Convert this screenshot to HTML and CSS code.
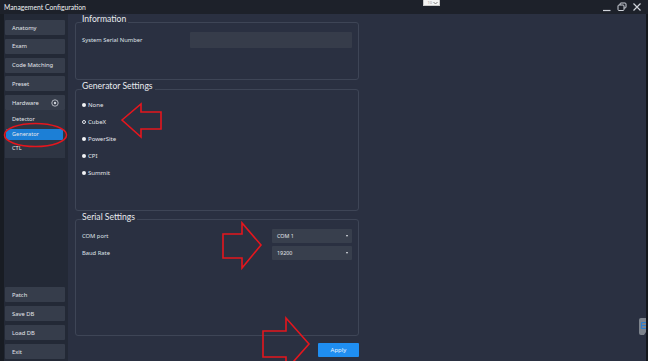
FILE: index.html
```html
<!DOCTYPE html>
<html lang="en">
<head>
<meta charset="utf-8">
<title>Management Configuration</title>
<link rel="stylesheet" href="styles.css">
</head>
<body>
<div class="window">
  <header class="titlebar">
    <span class="title">Management Configuration</span>
    <div class="mini-select"><span>10</span><svg width="5" height="4" viewBox="0 0 5 4"><path d="M0.5 1 L2.5 3 L4.5 1" fill="none" stroke="#777" stroke-width="0.9"/></svg></div>
    <div class="win-controls">
      <svg class="wc" width="10" height="10" viewBox="0 0 10 10"><path d="M1 8.5 H8.5" stroke="#cfd3da" stroke-width="1.2"/></svg>
      <svg class="wc" width="10" height="10" viewBox="0 0 10 10"><rect x="3" y="1" width="6" height="5" rx="1" fill="none" stroke="#cfd3da" stroke-width="1"/><rect x="1" y="3" width="6" height="5.5" rx="1" fill="#1d212a" stroke="#cfd3da" stroke-width="1"/></svg>
      <svg class="wc" width="10" height="10" viewBox="0 0 10 10"><path d="M1.5 1.5 L8.5 8.5 M8.5 1.5 L1.5 8.5" stroke="#cfd3da" stroke-width="1.2"/></svg>
    </div>
  </header>
  <div class="body">
    <aside class="sidebar">
      <nav class="nav-top">
        <button class="nav-btn">Anatomy</button>
        <button class="nav-btn">Exam</button>
        <button class="nav-btn">Code Matching</button>
        <button class="nav-btn">Preset</button>
        <div class="nav-group">
          <button class="nav-btn nav-expander">Hardware
            <svg width="8" height="8" viewBox="0 0 8 8"><circle cx="4" cy="4" r="3.2" fill="none" stroke="#cfd3da" stroke-width="0.8"/><circle cx="4" cy="4" r="1.2" fill="#cfd3da"/></svg>
          </button>
          <div class="submenu">
            <div class="sub-item">Detector</div>
            <div class="sub-item active">Generator</div>
            <div class="sub-item">CTL</div>
          </div>
        </div>
      </nav>
      <nav class="nav-bottom">
        <button class="nav-btn">Patch</button>
        <button class="nav-btn">Save DB</button>
        <button class="nav-btn">Load DB</button>
        <button class="nav-btn">Exit</button>
      </nav>
    </aside>
    <main class="content">
      <div class="column">
        <fieldset class="group group-info">
          <legend>Information</legend>
          <div class="form-row">
            <label class="field-label">System Serial Number</label>
            <div class="text-input"></div>
          </div>
        </fieldset>
        <fieldset class="group group-gen">
          <legend>Generator Settings</legend>
          <div class="radio-list">
            <div class="radio"><span class="dot"></span>None</div>
            <div class="radio"><span class="dot ring"></span>CubeX</div>
            <div class="radio"><span class="dot"></span>PowerSite</div>
            <div class="radio"><span class="dot"></span>CPI</div>
            <div class="radio"><span class="dot"></span>Summit</div>
          </div>
        </fieldset>
        <fieldset class="group group-serial">
          <legend>Serial Settings</legend>
          <div class="form-row compact">
            <label class="field-label">COM port</label>
            <div class="select"><span>COM 1</span><span class="caret"></span></div>
          </div>
          <div class="form-row compact">
            <label class="field-label">Baud Rate</label>
            <div class="select"><span>19200</span><span class="caret"></span></div>
          </div>
        </fieldset>
        <div class="actions"><button class="apply">Apply</button></div>
      </div>
    </main>
    <div class="edge"></div>
  </div>
  <div class="side-tab">
    <svg width="8" height="17" viewBox="0 0 8 17"><path d="M3 0 H8 V14 L6 17 H3 Q1 17 1 15 V2 Q1 0 3 0 Z" fill="#7d838c"/><path d="M3.5 4.5 H8 M3.5 7.5 H8 M3.5 10.5 H8 M3.5 4.5 V10.5" stroke="#2b7fd0" stroke-width="1.2" fill="none"/></svg>
  </div>
  <svg class="annotations" width="648" height="361" viewBox="0 0 648 361">
    <g fill="none" stroke="#e5161d" stroke-width="1.6" stroke-linejoin="miter">
      <polygon points="122,120 141,104 141,112 161,112 161,129 141,129 141,137"/>
      <polygon points="223,234 242,234 242,223 261,245 242,268 242,258 223,258"/>
      <polygon points="263,331 286,331 286,318 309,344 286,370 286,357 263,357"/>
      <ellipse cx="35.5" cy="135" rx="31" ry="11.5"/>
    </g>
  </svg>
</div>
</body>
</html>
```

FILE: styles.css
```css
* { box-sizing: border-box; }
html, body {
  margin: 0;
  padding: 0;
  background: #2a3041;
}
body {
  font-family: "Noto Sans", "Open Sans", sans-serif;
  color: #e4e7ec;
}
.window {
  position: relative;
  width: 648px;
  height: 361px;
  overflow: hidden;
  background: #2a3041;
  display: flex;
  flex-direction: column;
}
.titlebar {
  position: relative;
  height: 14px;
  flex: none;
  background: #1d212a;
  display: flex;
  align-items: center;
  padding: 0 6px 0 4px;
}
.title {
  font-family: Lato, "Noto Sans", sans-serif;
  font-size: 6.8px;
  color: #eef0f3;
  line-height: 10px;
}
.mini-select {
  position: absolute;
  left: 423px;
  top: 0;
  width: 17px;
  height: 6px;
  background: #f4f4f4;
  border: 1px solid #c9c9c9;
  border-top: none;
  display: flex;
  align-items: center;
  justify-content: flex-end;
  gap: 1px;
  padding-right: 1px;
  font-size: 4px;
  line-height: 5px;
  color: #999;
}
.win-controls {
  margin-left: auto;
  display: flex;
  gap: 5px;
  align-items: center;
}
.wc { display: block; }
.body {
  flex: 1;
  display: flex;
  min-height: 0;
}
.sidebar {
  width: 68px;
  flex: none;
  background: #232936;
  border-left: 4px solid #181c23;
  padding: 6px 3px 2px 1px;
  display: flex;
  flex-direction: column;
  justify-content: space-between;
}
.nav-top, .nav-bottom {
  display: flex;
  flex-direction: column;
  gap: 3.75px;
}
.nav-bottom { gap: 4px; }
.nav-btn {
  display: flex;
  align-items: center;
  justify-content: space-between;
  width: 60px;
  height: 15px;
  margin: 0;
  padding: 0 0 0 7px;
  border: none;
  border-radius: 1px;
  background: #363d4b;
  color: #e4e7ec;
  font-family: "Noto Sans", "Open Sans", sans-serif;
  font-size: 5.8px;
  text-align: left;
}
.nav-expander { padding-right: 6px; }
.nav-expander svg { display: block; }
.nav-group { display: flex; flex-direction: column; }
.submenu {
  width: 60px;
  background: #2e3543;
  padding: 4px 2px 3px 1px;
  display: flex;
  flex-direction: column;
  gap: 3px;
}
.sub-item {
  height: 11.5px;
  line-height: 11.5px;
  font-size: 5.6px;
  padding-left: 6px;
  color: #e4e7ec;
}
.sub-item.active {
  background: #1c7fd6;
  border-radius: 1px;
}
.content {
  flex: 1;
  padding-left: 7px;
  display: flex;
}
.column {
  width: 284px;
  display: flex;
  flex-direction: column;
}
.group {
  margin: 0;
  min-inline-size: 0;
  border: 1px solid #3e4556;
  border-radius: 3px;
  padding: 0 6px;
}
.group legend {
  font-family: Lato, "Noto Sans", sans-serif;
  font-size: 8.6px;
  line-height: 10px;
  padding: 0 2px 6px 0;
  margin-left: 0;
  color: #e8eaee;
}
.group-info { padding-top: 2px; padding-bottom: 31px; }
.group-gen { padding-top: 0; padding-bottom: 29px; margin-top: 1px; }
.group-serial { padding-top: 1px; padding-bottom: 75px; margin-top: 1px; }
.form-row {
  display: flex;
  align-items: center;
  justify-content: space-between;
  height: 16px;
}
.form-row.compact { height: 14px; }
.form-row.compact + .form-row.compact { margin-top: 3px; }
.field-label {
  font-size: 5.8px;
  color: #dfe2e8;
}
.text-input {
  width: 162px;
  height: 16px;
  background: #363c4a;
  border-radius: 1px;
}
.select {
  width: 80px;
  height: 14px;
  background: #383f4d;
  border-radius: 1px;
  display: flex;
  align-items: center;
  justify-content: space-between;
  padding: 0 4px 0 5px;
  font-size: 5.4px;
  color: #e4e7ec;
}
.caret {
  width: 0;
  height: 0;
  border-left: 1.5px solid transparent;
  border-right: 1.5px solid transparent;
  border-top: 2px solid #e4e7ec;
}
.radio-list {
  display: flex;
  flex-direction: column;
}
.radio {
  height: 16.8px;
  display: flex;
  align-items: center;
  gap: 2px;
  font-size: 6px;
  color: #e4e7ec;
}
.dot {
  width: 4px;
  height: 4px;
  border-radius: 50%;
  background: #f1f2f4;
}
.dot.ring {
  background: transparent;
  border: 1px solid #e4e7ec;
}
.actions {
  display: flex;
  justify-content: flex-end;
  margin-top: 7px;
}
.apply {
  width: 41px;
  height: 14px;
  margin: 0;
  border: none;
  border-radius: 1px;
  background: #1f8ef1;
  color: #e9f2fd;
  font-family: "Noto Sans", "Open Sans", sans-serif;
  font-size: 6px;
  padding: 0;
}
.edge {
  width: 2px;
  flex: none;
  background: #14171d;
}
.side-tab {
  position: absolute;
  left: 638px;
  top: 318px;
}
.side-tab svg { display: block; }
.annotations {
  position: absolute;
  left: 0;
  top: 0;
  pointer-events: none;
}
```
